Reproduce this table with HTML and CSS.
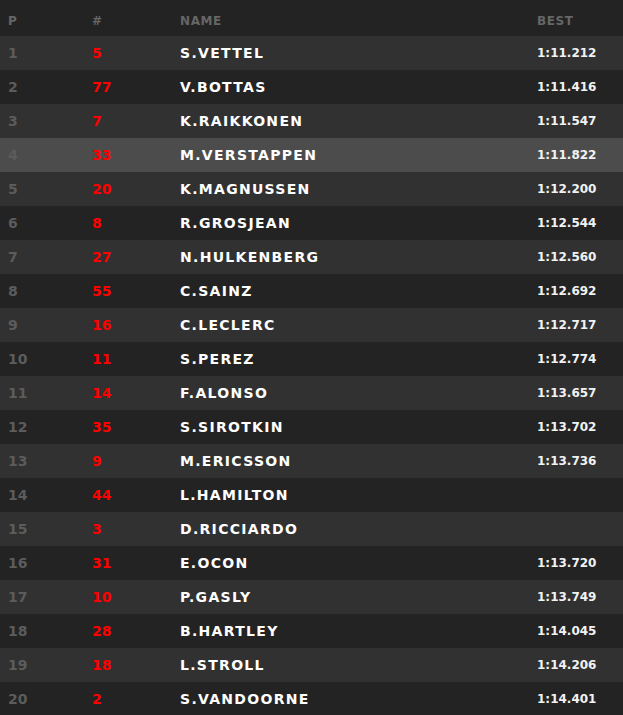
FILE: index.html
```html
<!DOCTYPE html>
<html lang="en">
<head>
<meta charset="utf-8">
<title>Results</title>
<link rel="stylesheet" href="styles.css">
</head>
<body>
<div class="table">
  <div class="row head"><span>P</span><span>#</span><span>NAME</span><span>BEST</span></div>
  <div class="row"><span class="pos">1</span><span class="num">5</span><span class="name">S.VETTEL</span><span class="time">1:11.212</span></div>
  <div class="row"><span class="pos">2</span><span class="num">77</span><span class="name">V.BOTTAS</span><span class="time">1:11.416</span></div>
  <div class="row"><span class="pos">3</span><span class="num">7</span><span class="name">K.RAIKKONEN</span><span class="time">1:11.547</span></div>
  <div class="row hl"><span class="pos">4</span><span class="num">33</span><span class="name">M.VERSTAPPEN</span><span class="time">1:11.822</span></div>
  <div class="row"><span class="pos">5</span><span class="num">20</span><span class="name">K.MAGNUSSEN</span><span class="time">1:12.200</span></div>
  <div class="row"><span class="pos">6</span><span class="num">8</span><span class="name">R.GROSJEAN</span><span class="time">1:12.544</span></div>
  <div class="row"><span class="pos">7</span><span class="num">27</span><span class="name">N.HULKENBERG</span><span class="time">1:12.560</span></div>
  <div class="row"><span class="pos">8</span><span class="num">55</span><span class="name">C.SAINZ</span><span class="time">1:12.692</span></div>
  <div class="row"><span class="pos">9</span><span class="num">16</span><span class="name">C.LECLERC</span><span class="time">1:12.717</span></div>
  <div class="row"><span class="pos">10</span><span class="num">11</span><span class="name">S.PEREZ</span><span class="time">1:12.774</span></div>
  <div class="row"><span class="pos">11</span><span class="num">14</span><span class="name">F.ALONSO</span><span class="time">1:13.657</span></div>
  <div class="row"><span class="pos">12</span><span class="num">35</span><span class="name">S.SIROTKIN</span><span class="time">1:13.702</span></div>
  <div class="row"><span class="pos">13</span><span class="num">9</span><span class="name">M.ERICSSON</span><span class="time">1:13.736</span></div>
  <div class="row"><span class="pos">14</span><span class="num">44</span><span class="name">L.HAMILTON</span><span class="time"></span></div>
  <div class="row"><span class="pos">15</span><span class="num">3</span><span class="name">D.RICCIARDO</span><span class="time"></span></div>
  <div class="row"><span class="pos">16</span><span class="num">31</span><span class="name">E.OCON</span><span class="time">1:13.720</span></div>
  <div class="row"><span class="pos">17</span><span class="num">10</span><span class="name">P.GASLY</span><span class="time">1:13.749</span></div>
  <div class="row"><span class="pos">18</span><span class="num">28</span><span class="name">B.HARTLEY</span><span class="time">1:14.045</span></div>
  <div class="row"><span class="pos">19</span><span class="num">18</span><span class="name">L.STROLL</span><span class="time">1:14.206</span></div>
  <div class="row"><span class="pos">20</span><span class="num">2</span><span class="name">S.VANDOORNE</span><span class="time">1:14.401</span></div>
</div>
</body>
</html>
```
FILE: styles.css
```css
html, body {
  margin: 0;
  padding: 0;
  background: #232323;
}
body {
  font-family: "DejaVu Sans", sans-serif;
  font-weight: bold;
}
.table {
  display: flex;
  flex-direction: column;
}
.row {
  display: grid;
  grid-template-columns: 84px 88px 357px 1fr;
  padding-left: 8px;
  height: 34px;
  line-height: 34px;
  align-items: center;
  white-space: nowrap;
}
.row:nth-child(even) {
  background: #313131;
}
.row:nth-child(odd) {
  background: #232323;
}
.row.hl {
  background: #4c4c4c;
}
.row.head {
  box-sizing: border-box;
  height: 36px;
  line-height: 30px;
  padding-top: 6px;
  background: #232323;
  font-size: 12px;
  color: #666666;
  letter-spacing: 0.6px;
}
.pos {
  color: #5c5c5c;
  font-size: 14px;
}
.num {
  color: #ff0000;
  font-size: 14px;
}
.name {
  color: #ffffff;
  font-size: 14px;
  letter-spacing: 1.3px;
}
.time {
  color: #f2f2f2;
  font-size: 12px;
}
```
